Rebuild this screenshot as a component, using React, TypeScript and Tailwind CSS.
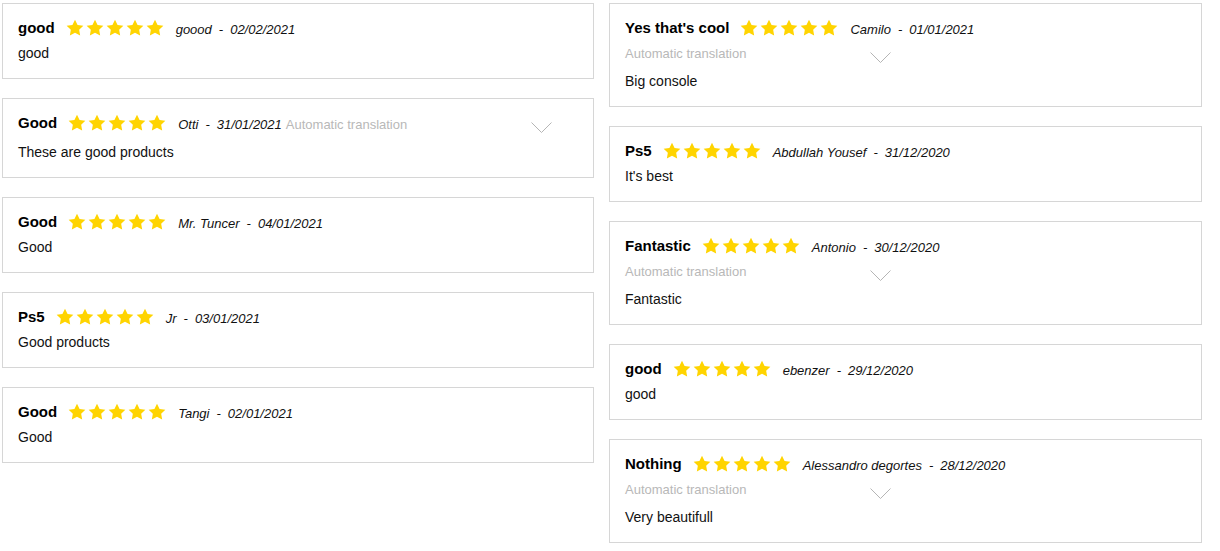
import React from "react";

type Review = {
  title: string;
  author: string;
  date: string;
  body: string;
  tr?: "inline" | "row";
};

const left: Review[] = [
  { title: "good", author: "goood", date: "02/02/2021", body: "good" },
  { title: "Good", author: "Otti", date: "31/01/2021", body: "These are good products", tr: "inline" },
  { title: "Good", author: "Mr. Tuncer", date: "04/01/2021", body: "Good" },
  { title: "Ps5", author: "Jr", date: "03/01/2021", body: "Good products" },
  { title: "Good", author: "Tangi", date: "02/01/2021", body: "Good" },
];

const right: Review[] = [
  { title: "Yes that's cool", author: "Camilo", date: "01/01/2021", body: "Big console", tr: "row" },
  { title: "Ps5", author: "Abdullah Yousef", date: "31/12/2020", body: "It's best" },
  { title: "Fantastic", author: "Antonio", date: "30/12/2020", body: "Fantastic", tr: "row" },
  { title: "good", author: "ebenzer", date: "29/12/2020", body: "good" },
  { title: "Nothing", author: "Alessandro degortes", date: "28/12/2020", body: "Very beautifull", tr: "row" },
];

function Star() {
  return (
    <svg width="20" height="20" viewBox="0 0 24 24" className="block">
      <path
        d="M12 2l3.09 6.26L22 9.27l-5 4.87 1.18 6.88L12 17.77l-6.18 3.25L7 14.14 2 9.27l6.91-1.01L12 2z"
        fill="#ffd400"
      />
    </svg>
  );
}

function Chevron({ inline }: { inline?: boolean }) {
  return (
    <svg
      width="21"
      height="11"
      viewBox="0 0 21 11"
      className={`${inline ? "mt-[7px]" : "mt-[8px]"} block`}
    >
      <polyline points="0.5,0.5 10.5,10.5 20.5,0.5" fill="none" stroke="#b5b5b5" strokeWidth="1" />
    </svg>
  );
}

function Translation({ inline }: { inline?: boolean }) {
  return (
    <div
      className={`flex w-[266px] items-start justify-between ${inline ? "h-[22px]" : "h-[24px]"}`}
    >
      <span className="text-[13px] leading-[20px] text-[#b8b8b8]">Automatic translation</span>
      <Chevron inline={inline} />
    </div>
  );
}

function Card({ r }: { r: Review }) {
  return (
    <div className="border border-[#d6d6d6] bg-white px-[15px] pt-[14px] pb-[16px]">
      <div className="flex items-start">
        <span className="h-[20px] text-[15px] font-bold leading-[20px] text-black">{r.title}</span>
        <div className="ml-[10px] flex h-[20px] items-center">
          <Star />
          <Star />
          <Star />
          <Star />
          <Star />
        </div>
        <span className="ml-[11px] h-[20px] pt-[2px] text-[13px] italic leading-[20px] text-[#111]">
          {r.author}
          <span className="mx-[7px]">-</span>
          {r.date}
        </span>
        {r.tr === "inline" && (
          <div className="ml-[4px] pt-[2px]">
            <Translation inline />
          </div>
        )}
      </div>
      {r.tr === "row" && (
        <div className="mt-[6px]">
          <Translation />
        </div>
      )}
      <p className={`${r.tr === "row" ? "mt-[4px]" : "mt-[6px]"} text-[14px] leading-[18px] text-[#111]`}>
        {r.body}
      </p>
    </div>
  );
}

export default function App() {
  return (
    <div
      className="min-h-[551px] bg-white pl-[2px] pt-[3px]"
      style={{ fontFamily: '"Liberation Sans", Arial, sans-serif' }}
    >
      <div className="flex items-start gap-[15px]">
        <div className="flex w-[592px] flex-col gap-[19px]">
          {left.map((r, i) => (
            <Card key={i} r={r} />
          ))}
        </div>
        <div className="flex w-[593px] flex-col gap-[19px]">
          {right.map((r, i) => (
            <Card key={i} r={r} />
          ))}
        </div>
      </div>
    </div>
  );
}
